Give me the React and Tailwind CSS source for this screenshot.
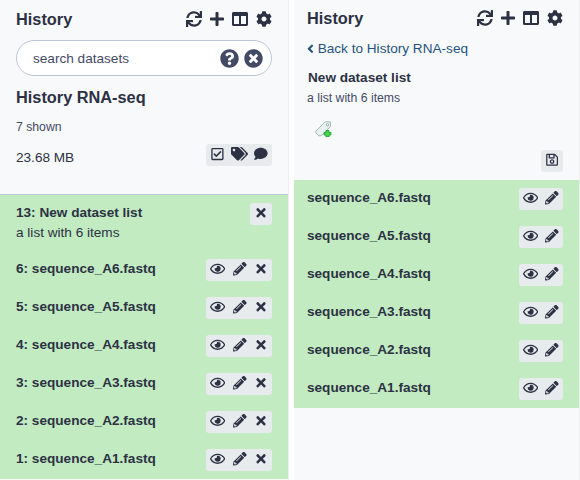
import React from 'react';
import {
  FaSync, FaPlus, FaColumns, FaCog, FaQuestionCircle, FaTimesCircle,
  FaRegCheckSquare, FaTags, FaComment, FaTimes, FaRegEye, FaPencilAlt,
  FaRegSave, FaAngleLeft,
} from 'react-icons/fa';

const names = ['sequence_A6.fastq', 'sequence_A5.fastq', 'sequence_A4.fastq', 'sequence_A3.fastq', 'sequence_A2.fastq', 'sequence_A1.fastq'];

function Group({ children }) {
  return <div className="flex h-[22px] shrink-0 rounded-[3px] bg-[#e8ebee] pb-0.5">{children}</div>;
}

function Cell({ children }) {
  return <button className="flex w-[22px] items-center justify-center pl-[0.5px]">{children}</button>;
}

function Header() {
  return (
    <div className="flex h-6 items-center justify-between">
      <h1 className="text-[16.32px] font-bold leading-6">History</h1>
      <div className="flex items-center gap-2">
        <FaSync className="h-4 w-4" />
        <FaPlus className="h-4 w-3.5" />
        <FaColumns className="h-4 w-4" />
        <FaCog className="h-4 w-4" />
      </div>
    </div>
  );
}

function Row({ name, removable }) {
  return (
    <div className="flex h-[38px] items-start justify-between pt-2">
      <div className="text-[13.6px] font-bold leading-5">{name}</div>
      <Group>
        <Cell><FaRegEye className="h-[13.6px] w-[15.3px] shrink-0" /></Cell>
        <Cell><FaPencilAlt className={removable ? 'ml-px h-[13.6px] w-[13.6px] shrink-0' : 'h-[13.6px] w-[13.6px] shrink-0'} /></Cell>
        {removable && <Cell><FaTimes className="h-[13.6px] w-2.5 shrink-0" /></Cell>}
      </Group>
    </div>
  );
}

export default function App() {
  return (
    <div className="flex h-[480px] w-[580px] overflow-hidden bg-white text-[#2c3143] [font-family:'Liberation_Sans',Arial,sans-serif]">
      <section className="h-full w-[289px] border-r border-[#eceef1] bg-[#f8f9fb]">
        <div className="h-[195px] border-b border-[#bdc6d5] px-4 pt-[7px]">
          <Header />
          <div className="mt-[9px] flex h-9 items-center rounded-[18px] border border-[#bdc6d5] bg-white pl-4 pr-2 text-[#434a65]">
            <span className="flex-1 pt-px text-[13.6px] leading-5">search datasets</span>
            <div className="flex gap-[5px]">
              <FaQuestionCircle size={19} />
              <FaTimesCircle size={19} />
            </div>
          </div>
          <h2 className="mt-[9px] text-[16.32px] font-bold leading-6">History RNA-seq</h2>
          <div className="mt-2 text-[12.24px] leading-5 text-[#434a65]">7 shown</div>
          <div className="mt-[7px] flex justify-between">
            <div className="pt-1 text-[13.6px] leading-5">23.68 MB</div>
            <Group>
              <Cell><FaRegCheckSquare className="h-[14px] w-[12.8px] shrink-0" /></Cell>
              <Cell><FaTags className="h-[13.6px] w-[17px] shrink-0" /></Cell>
              <Cell><FaComment className="h-[13.6px] w-[13.6px] shrink-0" /></Cell>
            </Group>
          </div>
        </div>
        <div className="h-[284px] bg-[#c2ebc2] px-4">
          <div className="flex h-14 justify-between pt-2">
            <div>
              <div className="text-[13.6px] font-bold leading-5">13: New dataset list</div>
              <div className="text-[13.6px] leading-5">a list with 6 items</div>
            </div>
            <Group><Cell><FaTimes className="h-[13.6px] w-2.5 shrink-0" /></Cell></Group>
          </div>
          {names.map((n, i) => <Row key={n} name={`${6 - i}: ${n}`} removable />)}
        </div>
      </section>
      <section className="ml-[5px] h-full w-[286px] border-r border-[#eceef1] bg-[#f8f9fb]">
        <div className="h-[180px] pl-[13px] pr-4 pt-1.5">
          <Header />
          <div className="mt-[9px] flex h-5 items-center gap-[3.9px] text-[13.6px] leading-5 text-[#25537b]">
            <FaAngleLeft className="mb-px h-[13.6px] w-[6.8px] shrink-0" />
            <span>Back to History RNA-seq</span>
          </div>
          <div className="ml-px mt-[9px] text-[13.6px] font-bold leading-5">New dataset list</div>
          <div className="text-[12.24px] leading-5 text-[#434a65]">a list with 6 items</div>
          <svg className="ml-2 mt-[13px]" width="17" height="16" viewBox="0 0 17 16">
            <path d="M10.2.8h5.3v4.8L6 14.8H3.8L.8 11.8v-1.7z" fill="#e9f1ee" stroke="#9ab5ac" strokeWidth=".9" />
            <circle cx="12.6" cy="3.8" r="1.2" fill="#fff" stroke="#829c92" strokeWidth=".8" />
            <path d="M11 9.5h3v2h2v2.5h-2v2h-3v-2H9v-2.5h2z" fill="#42d94c" stroke="#1b9a29" strokeWidth=".8" />
          </svg>
          <div className="mt-[13px] flex justify-end">
            <Group><Cell><FaRegSave className="h-[13.6px] w-[12.2px] shrink-0" /></Cell></Group>
          </div>
        </div>
        <div className="h-[228px] bg-[#c2ebc2] pl-[13px] pr-4">
          {names.map((n) => <Row key={n} name={n} />)}
        </div>
      </section>
    </div>
  );
}
